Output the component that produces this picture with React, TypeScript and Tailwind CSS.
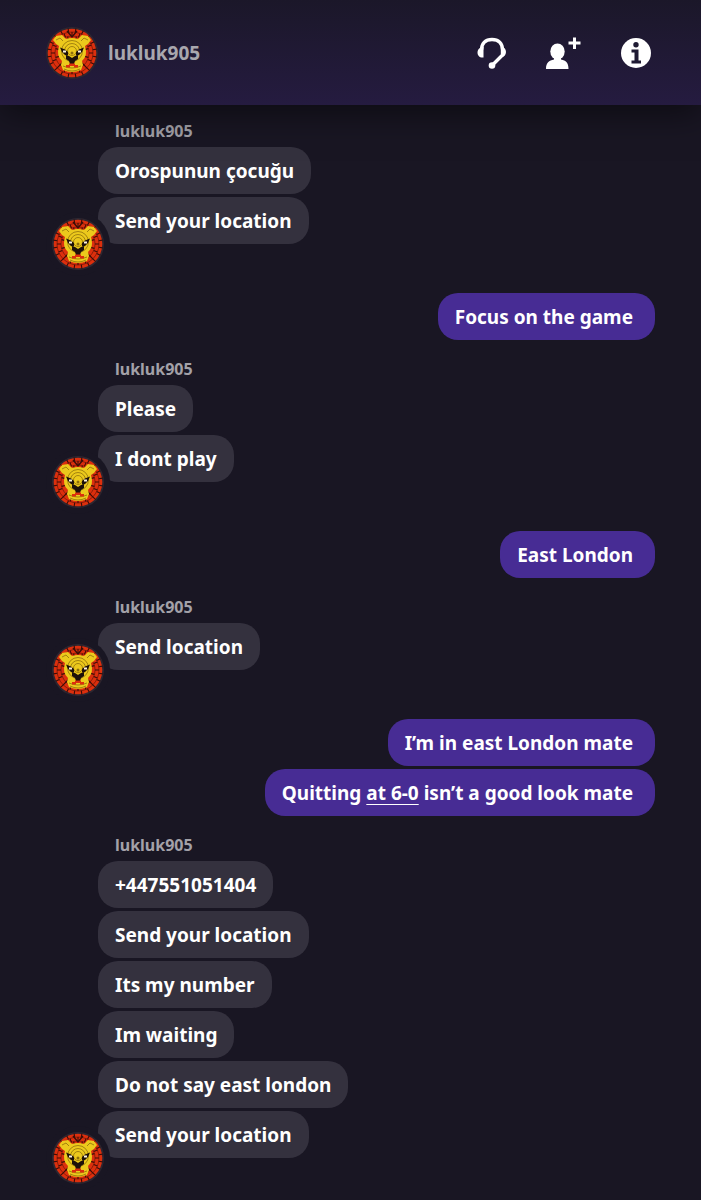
import React from "react";

type Message = {
  text: React.ReactNode;
};

type Thread = {
  from: "them" | "me";
  messages: Message[];
};

const USERNAME = "lukluk905";

const threads: Thread[] = [
  {
    from: "them",
    messages: [{ text: "Orospunun çocuğu" }, { text: "Send your location" }],
  },
  { from: "me", messages: [{ text: "Focus on the game" }] },
  { from: "them", messages: [{ text: "Please" }, { text: "I dont play" }] },
  { from: "me", messages: [{ text: "East London" }] },
  { from: "them", messages: [{ text: "Send location" }] },
  {
    from: "me",
    messages: [
      { text: "I’m in east London mate" },
      {
        text: (
          <>
            Quitting{" "}
            <a href="#score" className="underline decoration-1 underline-offset-4">
              at 6-0
            </a>{" "}
            isn’t a good look mate
          </>
        ),
      },
    ],
  },
  {
    from: "them",
    messages: [
      { text: "+447551051404" },
      { text: "Send your location" },
      { text: "Its my number" },
      { text: "Im waiting" },
      { text: "Do not say east london" },
      { text: "Send your location" },
    ],
  },
];

// Bricks of the mane, as short dark strokes laid out on rings
const maneRings = [
  { radius: 13, count: 12, offset: 15 },
  { radius: 17, count: 16, offset: 0 },
  { radius: 21, count: 20, offset: 9 },
];

function point(radius: number, degrees: number) {
  const a = (degrees * Math.PI) / 180;
  return `${(26 + radius * Math.cos(a)).toFixed(1)} ${(26 + radius * Math.sin(a)).toFixed(1)}`;
}

const bricks = maneRings
  .map(({ radius, count, offset }) =>
    Array.from({ length: count }, (_, i) => {
      const deg = offset + (i * 360) / count;
      return `M${point(radius, deg)}L${point(radius + 4, deg)}`;
    }).join("")
  )
  .join("");

function LionAvatar() {
  return (
    <svg viewBox="0 0 52 52" className="block size-full" role="img" aria-label={USERNAME}>
      <circle cx="26" cy="26" r="26" fill="#2e2731" />
      <circle cx="26" cy="26" r="24.3" fill="#dc2f0d" />
      <g fill="none" stroke="#3a0d08">
        <g strokeWidth="0.5">
          <circle cx="26" cy="26" r="17" />
          <circle cx="26" cy="26" r="21" />
        </g>
        <path d={bricks} strokeWidth="1.1" />
        <path d="M21 4l5 6 5-6" strokeWidth="1.4" />
      </g>
      {/* Face with ears and chin */}
      <path
        d="M7 13l3-4 6-1 4 4q6-2 12 0l4-4 6 1 3 4-3 4-3 2q3 10-3 15l1 4-2 5q-9 4-18 0l-2-5 1-4q-6-5-3-15l-3-2z"
        fill="#ecc91c"
      />
      <g fill="none" stroke="#8f700b" strokeWidth="0.8">
        <circle cx="26" cy="24" r="4.500" />
        <circle cx="26" cy="24" r="7.500" />
        <circle cx="26" cy="24" r="10.500" />
        <path d="M10 13l4-2 3 3M42 13l-4-2-3 3M17 39q9 4 18 0M18 42q8 4 16 0" />
      </g>
      {/* Brows, eyes, muzzle */}
      <g fill="#1d1109">
        <path d="M14 20.500l5 2 3 2.500v3.500l-3-.500-3-3zM38 20.500l-5 2-3 2.500v3.500l3-.500 3-3z" />
        <path d="M20 28l3 1 3 2 3-2 3-1v4l-3 2-1 3h-4l-1-3-3-2z" />
      </g>
      <circle cx="26" cy="26" r="1.500" fill="#8f700b" />
      <path d="M17 23.500h3v2h-3zM32 23.500h3v2h-3z" fill="#fff4dc" />
      <path d="M20 38h3v-1.500h6V38h3v2.500h-4v-1.500h-4v1.500h-4z" fill="#dc2f0d" />
    </svg>
  );
}

function HeadsetIcon() {
  return (
    <svg viewBox="0 0 32 34" className="h-[34px] w-8" fill="none" aria-hidden="true">
      <path
        d="M4.500 14C4.500 7.500 8.500 3.500 15 3.500S25.500 7.500 25.500 14v5L15 29.500"
        stroke="currentColor"
        strokeWidth="3.4"
        strokeLinejoin="round"
      />
      <path
        d="M6.500 11v10.500c-4 .500-6-2-6-5S2.500 11 6.500 11zM24 10.500c3 .500 5 2.500 5 5.500s-2 5-5 5.500z"
        fill="currentColor"
      />
      <circle cx="15" cy="29.500" r="3.300" fill="currentColor" />
    </svg>
  );
}

function AddFriendIcon() {
  return (
    <svg viewBox="0 0 36 34" className="h-[34px] w-9" fill="currentColor" aria-hidden="true">
      <ellipse cx="12.500" cy="15.500" rx="7.200" ry="8" />
      <path d="M9 20h7v3.500c5 1 7.500 3 7.500 9.500h-22.500c0-6.500 3-8.500 8-9.500z" />
      <path d="M28 1.500h3v4h4.500v3h-4.500v4.500h-3V8.500h-4.500v-3H28z" />
    </svg>
  );
}

function InfoIcon() {
  return (
    <svg viewBox="0 0 30 30" className="size-[30px]" aria-hidden="true">
      <circle cx="15" cy="15" r="15" fill="currentColor" />
      <g fill="#1f1a33">
        <circle cx="15" cy="6.800" r="2.700" />
        <path d="M10.500 11.500h7v11h2.500v3h-9.500v-3h3v-8h-3z" />
      </g>
    </svg>
  );
}

function Header() {
  return (
    <header className="relative z-10 flex h-[105px] items-center bg-linear-to-b from-[#1b1729] to-[#251b40] pr-[50px] pl-[46px] shadow-[0_8px_32px_rgba(0,0,0,0.5)]">
      <div className="size-[52px] shrink-0">
        <LionAvatar />
      </div>
      <h1 className="ml-[10px] flex-1 text-[19px] leading-7 font-bold text-[#a9a7ae]">
        {USERNAME}
      </h1>
      <nav className="flex items-center text-white">
        <button type="button" aria-label="Voice chat" className="mr-9">
          <HeadsetIcon />
        </button>
        <button type="button" aria-label="Add player" className="mr-10">
          <AddFriendIcon />
        </button>
        <button type="button" aria-label="Information">
          <InfoIcon />
        </button>
      </nav>
    </header>
  );
}

function ReceivedThread({ messages }: { messages: Message[] }) {
  return (
    <section className="relative pb-[49px] pl-[98px]">
      <h2 className="mb-1 pl-[17px] text-[16px] leading-6 font-bold text-[#a3a1a8]">
        {USERNAME}
      </h2>
      <ul className="flex flex-col items-start gap-[3px]">
        {messages.map((message, i) => (
          <li
            key={i}
            className="rounded-[20px] bg-[#34313e] px-[17px] pt-[10px] pb-2 text-[19px] leading-[29px] font-bold text-white"
          >
            {message.text}
          </li>
        ))}
      </ul>
      {/* Avatar cuts into the corner of the last bubble */}
      <div className="absolute bottom-[17px] left-[46px] size-16 rounded-full bg-[#191623] p-[6px]">
        <LionAvatar />
      </div>
    </section>
  );
}

function SentThread({ messages }: { messages: Message[] }) {
  return (
    <section className="pr-[46px] pb-[17px]">
      <ul className="flex flex-col items-end gap-[3px]">
        {messages.map((message, i) => (
          <li
            key={i}
            className="rounded-[20px] bg-[#472c94] pt-[10px] pr-[22px] pb-2 pl-[17px] text-[19px] leading-[29px] font-bold text-white"
          >
            {message.text}
          </li>
        ))}
      </ul>
    </section>
  );
}

function App() {
  return (
    <div className="min-h-screen bg-[#191623] font-['Noto_Sans',sans-serif]">
      <Header />
      <main className="pt-[14px]">
        {threads.map((thread, i) =>
          thread.from === "them" ? (
            <ReceivedThread key={i} messages={thread.messages} />
          ) : (
            <SentThread key={i} messages={thread.messages} />
          )
        )}
      </main>
    </div>
  );
}

export default App;
